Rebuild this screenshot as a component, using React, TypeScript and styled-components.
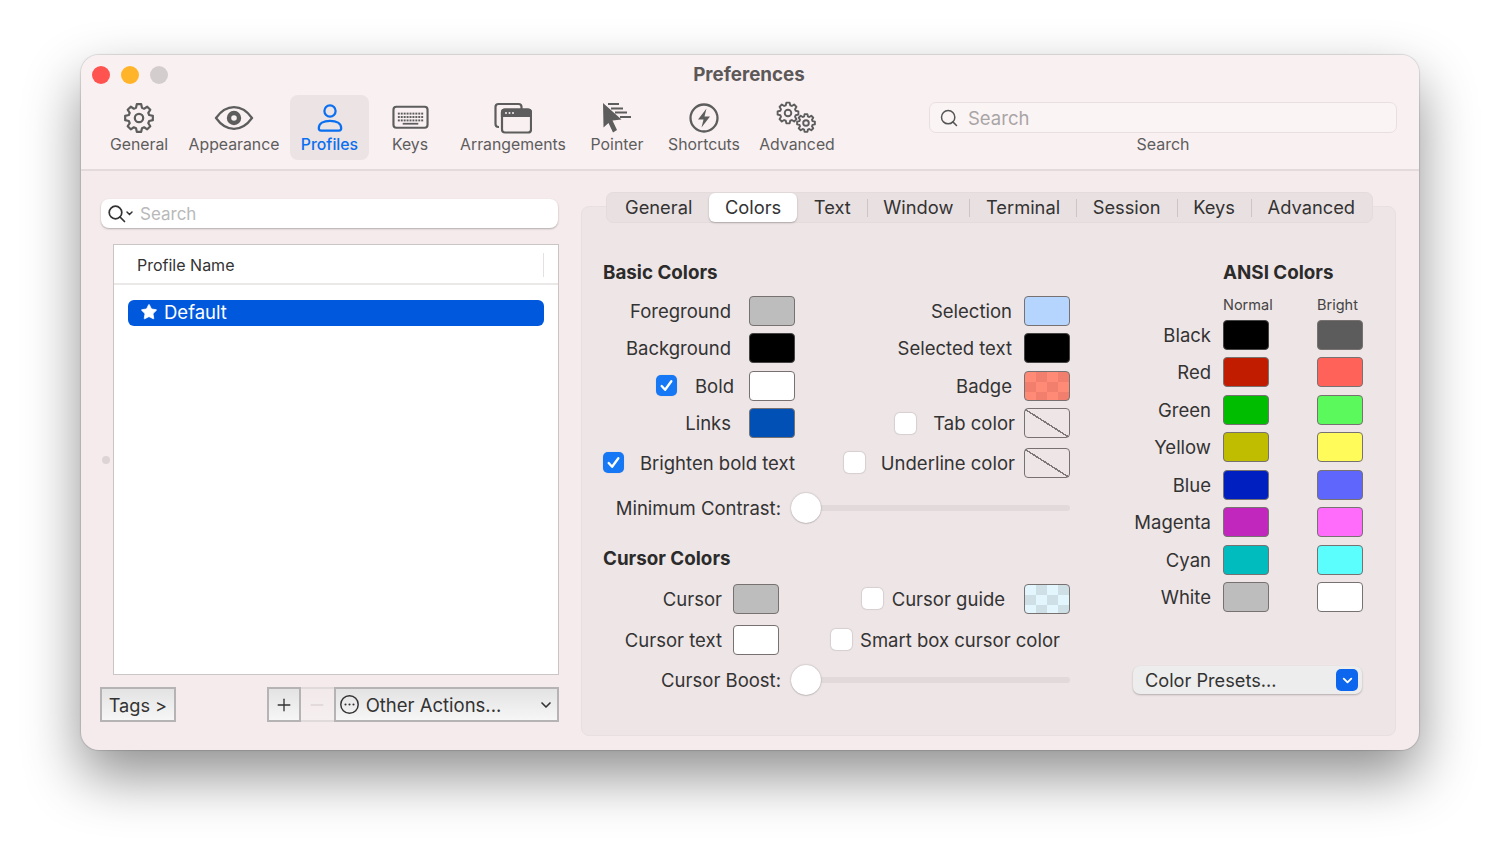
import React from 'react';
import styled, { createGlobalStyle } from 'styled-components';
import { ChevronDown, Minus, Plus, Search, Star } from 'lucide-react';

const GlobalStyle = createGlobalStyle`
    html, body {
        margin: 0;
        height: 857px;
        overflow: hidden;
        background: #fff;
        font-family: Inter, "Liberation Sans", sans-serif;
        color: #333;
    }
    * {
        box-sizing: border-box;
    }
`;

const Page = styled.div`
    padding: 55px 81px 0;
`;

const Window = styled.div`
    width: 1338px;
    height: 695px;
    border-radius: 18px;
    background: #f5ebec;
    overflow: hidden;
    box-shadow: 0 26px 56px rgba(0, 0, 0, 0.44), 0 0 1px 1px rgba(0, 0, 0, 0.12);
`;

const Header = styled.div`
    background: #f9f0f1;
    height: 116px;
    border-bottom: 2px solid #e2dadb;
`;

const TitleBar = styled.div`
    display: grid;
    grid-template-columns: 1fr auto 1fr;
    align-items: center;
    height: 40px;
    padding: 0 11px;
`;

const Lights = styled.div`
    display: flex;
    gap: 11px;
`;

const Light = styled.span<{ $color: string }>`
    width: 18px;
    height: 18px;
    border-radius: 50%;
    background: ${(p) => p.$color};
`;

const Title = styled.div`
    font-size: 18.8px;
    font-weight: 700;
    color: #5c5858;
    margin: 0 2px 2px 0;
`;

const Toolbar = styled.div`
    display: flex;
    padding-left: 19px;
`;

const ToolItem = styled.div<{ $width: number; $active?: boolean }>`
    width: ${(p) => p.$width}px;
    height: 65px;
    border-radius: 8px;
    display: flex;
    flex-direction: column;
    align-items: center;
    background: ${(p) => (p.$active ? '#ebe3e4' : 'transparent')};
    color: ${(p) => (p.$active ? '#0a6ff0' : '#5d5d5d')};
    font-size: 15.8px;
    font-weight: ${(p) => (p.$active ? 500 : 400)};
`;

const ToolIcon = styled.div`
    height: 40px;
    padding-top: 5px;
    display: flex;
    align-items: center;
    justify-content: center;
`;

const ToolSearch = styled.div`
    width: 468px;
    margin: 7px 0 0 84px;
    display: flex;
    flex-direction: column;
    align-items: center;
`;

const ToolSearchField = styled.div`
    width: 100%;
    height: 31px;
    border: 1px solid #e7dfe0;
    border-radius: 7px;
    background: #fbf4f5;
    display: flex;
    align-items: center;
    gap: 9px;
    padding: 1px 0 0 9px;
    color: #a9a5a5;
    font-size: 18.5px;
`;

const ToolSearchLabel = styled.div`
    margin-top: 1px;
    font-size: 16px;
    line-height: 20px;
    color: #5d5d5d;
`;

const Main = styled.div`
    display: flex;
    gap: 22px;
    padding: 21px 0 0 19px;
`;

const LeftColumn = styled.div`
    width: 459px;
    padding-top: 7px;
`;

const ProfileSearch = styled.div`
    margin-left: 1px;
    width: 457px;
    height: 29px;
    border-radius: 8px;
    background: #fff;
    box-shadow: 0 1px 2px rgba(0, 0, 0, 0.28);
    display: flex;
    align-items: center;
    padding-left: 6px;
    gap: 6px;
    color: #b9b9b9;
    font-size: 17px;
`;

const ListRow = styled.div`
    display: flex;
    margin-top: 16px;
`;

const Handle = styled.div`
    width: 13px;
    padding-right: 2px;
    display: flex;
    align-items: center;
    justify-content: center;
    &::before {
        content: '';
        width: 8px;
        height: 8px;
        border-radius: 50%;
        background: #ddd4d5;
    }
`;

const List = styled.div`
    width: 446px;
    height: 431px;
    border: 1.5px solid #cac6c6;
    background: #fff;
`;

const ListHeader = styled.div`
    height: 40px;
    border-bottom: 2px solid #ebe8e8;
    display: flex;
    align-items: center;
    justify-content: space-between;
    padding: 2px 14px 0 23px;
    font-size: 16px;
    color: #333;
    &::after {
        content: '';
        width: 1.5px;
        height: 24px;
        background: #e3e1e1;
    }
`;

const ProfileRow = styled.div`
    margin: 15px 14px 0;
    height: 26px;
    border-radius: 6px;
    background: #0058dd;
    color: #fff;
    font-size: 18.5px;
    display: flex;
    align-items: center;
    gap: 6px;
    padding: 0 0 2px 12px;
`;

const ButtonBar = styled.div`
    display: flex;
    margin-top: 12px;
`;

const BarButton = styled.div<{ $width: number; $disabled?: boolean }>`
    width: ${(p) => p.$width}px;
    height: 35px;
    border: 2px solid ${(p) => (p.$disabled ? '#e0dadb' : '#b5b3b3')};
    border-left-width: ${(p) => (p.$disabled ? 0 : 2)}px;
    border-right-width: ${(p) => (p.$disabled ? 0 : 2)}px;
    background: ${(p) =>
        p.$disabled ? 'linear-gradient(#f1e9ea, #f6eff0)' : 'linear-gradient(#e3e3e3, #f6f6f6)'};
    color: ${(p) => (p.$disabled ? '#cfc8c9' : '#333')};
    font-size: 18.2px;
    padding-top: 1px;
    display: flex;
    align-items: center;
    justify-content: center;
`;

const TagsButton = styled(BarButton)`
    margin-right: 91px;
`;

const ActionsButton = styled(BarButton)`
    justify-content: flex-start;
    padding: 0 3px 0 3px;
    gap: 6px;
    font-size: 18.5px;
`;

const ActionsLabel = styled.span`
    flex: 1;
`;

const RightColumn = styled.div`
    width: 815px;
    display: flex;
    flex-direction: column;
`;

const TabBar = styled.div`
    position: relative;
    z-index: 1;
    margin: 0 23px -17px 25px;
    height: 31px;
    border-radius: 7px;
    background: #e9e0e1;
    border: 1px solid #e4dbdc;
    padding: 0 1px 0 2px;
    display: flex;
    align-items: center;
    justify-content: flex-start;
`;

const Tab = styled.div<{ $active?: boolean }>`
    height: 29px;
    padding: 0 16px 2px;
    border-radius: 6px;
    display: flex;
    align-items: center;
    font-size: 18.3px;
    color: #333;
    background: ${(p) => (p.$active ? '#fff' : 'transparent')};
    box-shadow: ${(p) => (p.$active ? '0 1px 2px rgba(0, 0, 0, 0.25)' : 'none')};
`;

const TabSep = styled.span<{ $hidden?: boolean }>`
    width: 1px;
    height: 18px;
    background: ${(p) => (p.$hidden ? 'transparent' : '#cdc4c5')};
`;

const Panel = styled.div`
    height: 530px;
    border: 1px solid #e8dfe0;
    border-radius: 8px;
    background: #eee5e6;
    display: flex;
    gap: 63px;
    padding-left: 21px;
`;

const ColorsColumn = styled.div`
    width: 467px;
    padding-top: 54px;
`;

const Heading = styled.div`
    font-size: 18.8px;
    font-weight: 700;
    line-height: 24px;
    color: #2b2b2b;
`;

const CursorHeading = styled(Heading)`
    margin-top: 24px;
`;

const ColorRow = styled.div<{ $height: number; $top?: number }>`
    display: grid;
    grid-template-columns: 192px 275px;
    height: ${(p) => p.$height}px;
    margin-top: ${(p) => p.$top ?? 0}px;
`;

const Cell = styled.div<{ $gap: number; $inset?: number }>`
    display: flex;
    align-items: center;
    justify-content: flex-end;
    gap: ${(p) => p.$gap}px;
    padding-right: ${(p) => p.$inset ?? 0}px;
    font-size: 18.5px;
    color: #333;
    white-space: nowrap;
`;

const CheckGroup = styled.div<{ $gap: number }>`
    display: flex;
    align-items: center;
    gap: ${(p) => p.$gap}px;
`;

const Box = styled.span<{ $checked?: boolean }>`
    width: 21px;
    height: 21px;
    border-radius: 5px;
    display: flex;
    align-items: center;
    justify-content: center;
    background: ${(p) => (p.$checked ? '#1678f5' : '#fff')};
    box-shadow: ${(p) =>
        p.$checked ? '0 0 1px rgba(0, 0, 0, 0.2)' : '0 0 1px 1px rgba(0, 0, 0, 0.1)'};
`;

const swatchBackgrounds: Record<string, string> = {
    none: 'linear-gradient(to top right, transparent calc(50% - 1px), #7d7777 calc(50% - 1px), #7d7777 calc(50% + 0.5px), transparent calc(50% + 0.5px))',
    badge: 'repeating-conic-gradient(#f27f6d 0% 25%, #ff8b77 0% 50%) 0 0 / 22px 20px',
    guide: 'repeating-conic-gradient(#cfdfe6 0% 25%, #e3f5fd 0% 50%) 0 0 / 22px 20px',
};

const SwatchBox = styled.span<{ $fill: string }>`
    flex: none;
    display: block;
    width: 46px;
    height: 30px;
    border: 1.5px solid ${(p) => (p.$fill === '#000000' ? '#444' : '#777171')};
    border-radius: 4px;
    background: ${(p) => swatchBackgrounds[p.$fill] ?? p.$fill};
`;

const SliderRow = styled.div<{ $top: number }>`
    display: flex;
    align-items: center;
    margin-top: ${(p) => p.$top}px;
    height: 30px;
    font-size: 18.5px;
    color: #333;
`;

const SliderLabel = styled.div`
    width: 178px;
    margin-right: 10px;
    text-align: right;
    white-space: nowrap;
`;

const Slider = styled.div`
    position: relative;
    width: 279px;
    height: 30px;
    display: flex;
    align-items: center;
    &::before {
        content: '';
        position: absolute;
        left: 6px;
        right: 0;
        top: 12px;
        height: 6px;
        border-radius: 3px;
        background: #e1d9da;
    }
`;

const Thumb = styled.span`
    position: relative;
    width: 30px;
    height: 30px;
    border-radius: 50%;
    background: #fff;
    box-shadow: 0 0 2px rgba(0, 0, 0, 0.3), 0 1px 1px rgba(0, 0, 0, 0.1);
`;

const AnsiColumn = styled.div`
    width: 230px;
    padding-top: 54px;
`;

const AnsiHeading = styled(Heading)`
    padding-left: 90px;
`;

const AnsiCaption = styled.div`
    display: grid;
    grid-template-columns: 46px 46px;
    column-gap: 48px;
    margin: 10px 0 1px 90px;
    font-size: 14.5px;
    line-height: 20px;
    color: #444;
    white-space: nowrap;
`;

const AnsiRow = styled.div`
    display: grid;
    grid-template-columns: 78px 46px 46px;
    align-items: center;
    height: 37.5px;
    font-size: 18.5px;
    color: #333;
    ${SwatchBox}:nth-child(2) {
        margin-left: 12px;
    }
    ${SwatchBox}:nth-child(3) {
        margin-left: 60px;
    }
`;

const AnsiName = styled.div`
    text-align: right;
`;

const Presets = styled.div`
    margin-top: 50px;
    width: 229px;
    height: 28px;
    border-radius: 7px;
    background: #ededed;
    box-shadow: 0 1px 2px rgba(0, 0, 0, 0.25);
    display: flex;
    align-items: center;
    justify-content: space-between;
    padding: 0 4px 0 12px;
    font-size: 18.2px;
    color: #333;
`;

const PresetsArrow = styled.span`
    width: 22px;
    height: 22px;
    border-radius: 5px;
    background: #0d67ee;
    color: #fff;
    display: flex;
    align-items: center;
    justify-content: center;
`;

// gear outline, computed because three sizes of it are used
const gearPath = (cx: number, cy: number, outer: number, inner: number, teeth: number) => {
    const points: string[] = [];
    const step = (Math.PI * 2) / teeth;
    for (let i = 0; i < teeth; i++) {
        const a = i * step - Math.PI / 2;
        const at = (r: number, off: number) =>
            `${(cx + r * Math.cos(a + off * step)).toFixed(2)} ${(cy + r * Math.sin(a + off * step)).toFixed(2)}`;
        points.push(at(inner, -0.36), at(outer, -0.2), at(outer, 0.2), at(inner, 0.36));
    }
    return `M${points.join('L')}Z`;
};

const GearIcon = () => (
    <svg width="32" height="32" viewBox="0 0 32 32" fill="none" stroke="#5d5d5d" strokeWidth="2.2" strokeLinejoin="round">
        <path d={gearPath(16, 16, 14, 10.6, 8)} />
        <circle cx="16" cy="16" r="4.2" />
    </svg>
);

const EyeIcon = () => (
    <svg width="40" height="26" viewBox="0 0 40 26" fill="none">
        <path d="M2 13C7 6 13 2.2 20 2.2S33 6 38 13c-5 7-11 10.800-18 10.800S7 20 2 13z" stroke="#5d5d5d" strokeWidth="2.200" />
        <circle cx="20" cy="13" r="5" stroke="#5d5d5d" strokeWidth="4.400" />
    </svg>
);

const PersonIcon = () => (
    <svg width="28" height="30" viewBox="0 0 30 32" fill="none" stroke="#0a6ff0" strokeWidth="2.400">
        <circle cx="15" cy="8.500" r="6" />
        <path d="M3 27c0-5 5-8 12-8s12 3 12 8c0 1.500-1 2.500-2.500 2.500h-19C4 29.500 3 28.500 3 27z" />
    </svg>
);

const keyRows = [
    { y: 8.5, x: [7, 10, 13, 16, 19, 22, 25, 28, 31] },
    { y: 12, x: [7, 10, 13, 16, 19, 22, 25, 28, 31] },
    { y: 15.5, x: [7, 10, 13, 16, 19, 22, 25, 28, 31] },
];

const KeyboardIcon = () => (
    <svg width="37" height="25" viewBox="0 0 38 25" fill="none">
        <rect x="1.500" y="1.500" width="35" height="21.500" rx="3" stroke="#5d5d5d" strokeWidth="2.200" />
        {keyRows.map((row) =>
            row.x.map((x) => <rect key={`${row.y}-${x}`} x={x - 1} y={row.y - 1} width="2" height="2" fill="#5d5d5d" />),
        )}
        <rect x="11" y="18" width="16" height="1.800" fill="#5d5d5d" />
    </svg>
);

const WindowsIcon = () => (
    <svg width="38" height="32" viewBox="0 0 38 32" fill="none" stroke="#5d5d5d" strokeWidth="2.200">
        <path d="M5 25h-.500C2.500 25 1.500 24 1.500 22V5c0-2 1-3 3-3h20c2 0 3 1 3 3v2" />
        <rect x="8" y="7.500" width="29" height="23" rx="3" />
        <path d="M8 10.500c0-2 1-3 3-3h23c2 0 3 1 3 3V14H8z" fill="#5d5d5d" />
        <g fill="#f9f0f1" stroke="none">
            <circle cx="12" cy="11" r="1" />
            <circle cx="15.500" cy="11" r="1" />
            <circle cx="19" cy="11" r="1" />
        </g>
    </svg>
);

const PointerIcon = () => (
    <svg width="34" height="32" viewBox="0 0 34 32" fill="#5d5d5d">
        <path d="M3 1L3.500 25.500 8.500 21 13 30.500 17 28 12.500 18.500 21.500 17.500z" />
        <g stroke="#5d5d5d" strokeWidth="1.800" fill="none">
            <path d="M8 2h11" />
            <path d="M11 6.500h12" />
            <path d="M15 10.500h12" />
            <path d="M20 15h11" />
        </g>
    </svg>
);

const BoltIcon = () => (
    <svg width="32" height="32" viewBox="0 0 32 32" fill="none">
        <circle cx="16" cy="16" r="13.500" stroke="#5d5d5d" strokeWidth="2.300" />
        <path d="M18.500 6.500L10 17.500h5.500L13.500 25.500 22 14.500h-5.500z" fill="#5d5d5d" />
    </svg>
);

const GearsIcon = () => (
    <svg width="42" height="34" viewBox="0 0 42 34" fill="none" stroke="#5d5d5d" strokeWidth="1.900" strokeLinejoin="round">
        <path d={gearPath(12, 12, 10.500, 8, 8)} />
        <circle cx="12" cy="12" r="3.300" />
        <path d={gearPath(30, 22, 9, 6.800, 8)} />
        <circle cx="30" cy="22" r="2.800" />
    </svg>
);

const SearchMenuIcon = () => (
    <svg width="27" height="20" viewBox="0 0 27 20" fill="none" stroke="#333" strokeLinecap="round">
        <circle cx="8.500" cy="8.500" r="6.300" strokeWidth="1.700" />
        <path d="M13 13l4.500 4.500" strokeWidth="1.700" />
        <path d="M20 8l2.500 2.500L25 8" strokeWidth="1.500" />
    </svg>
);

const MoreCircleIcon = () => (
    <svg width="21" height="21" viewBox="0 0 20 20" fill="none">
        <circle cx="10" cy="10" r="8.300" stroke="#333" strokeWidth="1.400" />
        <g fill="#333">
            <circle cx="6.200" cy="10" r="1" />
            <circle cx="10" cy="10" r="1" />
            <circle cx="13.800" cy="10" r="1" />
        </g>
    </svg>
);

const CheckMark = () => (
    <svg width="15" height="15" viewBox="0 0 14 14" fill="none" stroke="#fff" strokeWidth="2.200" strokeLinecap="round" strokeLinejoin="round">
        <path d="M2.500 7.500L5.700 11 11.500 3" />
    </svg>
);

const toolItems: { label: string; width: number; icon: React.ReactNode; active?: boolean }[] = [
    { label: 'General', width: 78, icon: <GearIcon /> },
    { label: 'Appearance', width: 112, icon: <EyeIcon /> },
    { label: 'Profiles', width: 79, icon: <PersonIcon />, active: true },
    { label: 'Keys', width: 82, icon: <KeyboardIcon /> },
    { label: 'Arrangements', width: 124, icon: <WindowsIcon /> },
    { label: 'Pointer', width: 84, icon: <PointerIcon /> },
    { label: 'Shortcuts', width: 90, icon: <BoltIcon /> },
    { label: 'Advanced', width: 96, icon: <GearsIcon /> },
];

const tabs = ['General', 'Colors', 'Text', 'Window', 'Terminal', 'Session', 'Keys', 'Advanced'];

const ansiColors = [
    { name: 'Black', normal: '#000000', bright: '#5c5c5c' },
    { name: 'Red', normal: '#c11b00', bright: '#ff6259' },
    { name: 'Green', normal: '#00bd00', bright: '#5bf95b' },
    { name: 'Yellow', normal: '#c0bc00', bright: '#fefb5b' },
    { name: 'Blue', normal: '#001fc0', bright: '#5f66fb' },
    { name: 'Magenta', normal: '#c126bd', bright: '#ff6bfb' },
    { name: 'Cyan', normal: '#00bcbf', bright: '#5cfdfd' },
    { name: 'White', normal: '#bdbdbd', bright: '#ffffff' },
];

const Check: React.FC<{ checked?: boolean; gap: number; label: string }> = ({ checked, gap, label }) => (
    <CheckGroup $gap={gap}>
        <Box $checked={checked}>{checked && <CheckMark />}</Box>
        {label}
    </CheckGroup>
);

const App: React.FC = () => {
    return (
        <Page>
            <GlobalStyle />
            <Window>
                <Header>
                    <TitleBar>
                        <Lights>
                            <Light $color="#ff5350" />
                            <Light $color="#ffb429" />
                            <Light $color="#d4cdce" />
                        </Lights>
                        <Title>Preferences</Title>
                    </TitleBar>
                    <Toolbar>
                        {toolItems.map((item) => (
                            <ToolItem key={item.label} $width={item.width} $active={item.active}>
                                <ToolIcon>{item.icon}</ToolIcon>
                                {item.label}
                            </ToolItem>
                        ))}
                        <ToolSearch>
                            <ToolSearchField>
                                <Search size={20} color="#555" strokeWidth={1.8} />
                                Search
                            </ToolSearchField>
                            <ToolSearchLabel>Search</ToolSearchLabel>
                        </ToolSearch>
                    </Toolbar>
                </Header>
                <Main>
                    <LeftColumn>
                        <ProfileSearch>
                            <SearchMenuIcon />
                            Search
                        </ProfileSearch>
                        <ListRow>
                            <Handle />
                            <List>
                                <ListHeader>Profile Name</ListHeader>
                                <ProfileRow>
                                    <Star size={18} fill="#fff" strokeWidth={1} />
                                    Default
                                </ProfileRow>
                            </List>
                        </ListRow>
                        <ButtonBar>
                            <TagsButton $width={76}>Tags &gt;</TagsButton>
                            <BarButton $width={34}>
                                <Plus size={20} strokeWidth={1.6} />
                            </BarButton>
                            <BarButton $width={33} $disabled>
                                <Minus size={20} strokeWidth={1.4} />
                            </BarButton>
                            <ActionsButton $width={226}>
                                <MoreCircleIcon />
                                <ActionsLabel>Other Actions...</ActionsLabel>
                                <ChevronDown size={16} strokeWidth={2.5} />
                            </ActionsButton>
                        </ButtonBar>
                    </LeftColumn>
                    <RightColumn>
                        <TabBar>
                            {tabs.map((tab, i) => (
                                <React.Fragment key={tab}>
                                    {i > 0 && <TabSep $hidden={i < 3} />}
                                    <Tab $active={tab === 'Colors'}>{tab}</Tab>
                                </React.Fragment>
                            ))}
                        </TabBar>
                        <Panel>
                            <ColorsColumn>
                                <Heading>Basic Colors</Heading>
                                <ColorRow $height={37.5} $top={7}>
                                    <Cell $gap={18}>
                                        Foreground
                                        <SwatchBox $fill="#bdbdbd" />
                                    </Cell>
                                    <Cell $gap={12}>
                                        Selection
                                        <SwatchBox $fill="#b5d5ff" />
                                    </Cell>
                                </ColorRow>
                                <ColorRow $height={37.5}>
                                    <Cell $gap={18}>
                                        Background
                                        <SwatchBox $fill="#000000" />
                                    </Cell>
                                    <Cell $gap={12}>
                                        Selected text
                                        <SwatchBox $fill="#000000" />
                                    </Cell>
                                </ColorRow>
                                <ColorRow $height={37.5}>
                                    <Cell $gap={15}>
                                        <Check checked gap={18} label="Bold" />
                                        <SwatchBox $fill="#ffffff" />
                                    </Cell>
                                    <Cell $gap={12}>
                                        Badge
                                        <SwatchBox $fill="badge" />
                                    </Cell>
                                </ColorRow>
                                <ColorRow $height={37.5}>
                                    <Cell $gap={18}>
                                        Links
                                        <SwatchBox $fill="#0050b5" />
                                    </Cell>
                                    <Cell $gap={9}>
                                        <Check gap={17} label="Tab color" />
                                        <SwatchBox $fill="none" />
                                    </Cell>
                                </ColorRow>
                                <ColorRow $height={37.5} $top={2}>
                                    <Cell $gap={0}>
                                        <Check checked gap={16} label="Brighten bold text" />
                                    </Cell>
                                    <Cell $gap={9}>
                                        <Check gap={16} label="Underline color" />
                                        <SwatchBox $fill="none" />
                                    </Cell>
                                </ColorRow>
                                <SliderRow $top={11}>
                                    <SliderLabel>Minimum Contrast:</SliderLabel>
                                    <Slider>
                                        <Thumb />
                                    </Slider>
                                </SliderRow>
                                <CursorHeading>Cursor Colors</CursorHeading>
                                <ColorRow $height={41} $top={7.5}>
                                    <Cell $gap={11} $inset={16}>
                                        Cursor
                                        <SwatchBox $fill="#bdbdbd" />
                                    </Cell>
                                    <Cell $gap={19}>
                                        <Check gap={9} label="Cursor guide" />
                                        <SwatchBox $fill="guide" />
                                    </Cell>
                                </ColorRow>
                                <ColorRow $height={41}>
                                    <Cell $gap={11} $inset={16}>
                                        Cursor text
                                        <SwatchBox $fill="#ffffff" />
                                    </Cell>
                                    <Cell $gap={0} $inset={10}>
                                        <Check gap={8} label="Smart box cursor color" />
                                    </Cell>
                                </ColorRow>
                                <SliderRow $top={4.5}>
                                    <SliderLabel>Cursor Boost:</SliderLabel>
                                    <Slider>
                                        <Thumb />
                                    </Slider>
                                </SliderRow>
                            </ColorsColumn>
                            <AnsiColumn>
                                <AnsiHeading>ANSI Colors</AnsiHeading>
                                <AnsiCaption>
                                    <span>Normal</span>
                                    <span>Bright</span>
                                </AnsiCaption>
                                {ansiColors.map((color) => (
                                    <AnsiRow key={color.name}>
                                        <AnsiName>{color.name}</AnsiName>
                                        <SwatchBox $fill={color.normal} />
                                        <SwatchBox $fill={color.bright} />
                                    </AnsiRow>
                                ))}
                                <Presets>
                                    Color Presets...
                                    <PresetsArrow>
                                        <ChevronDown size={15} strokeWidth={3} />
                                    </PresetsArrow>
                                </Presets>
                            </AnsiColumn>
                        </Panel>
                    </RightColumn>
                </Main>
            </Window>
        </Page>
    );
};

export default App;
